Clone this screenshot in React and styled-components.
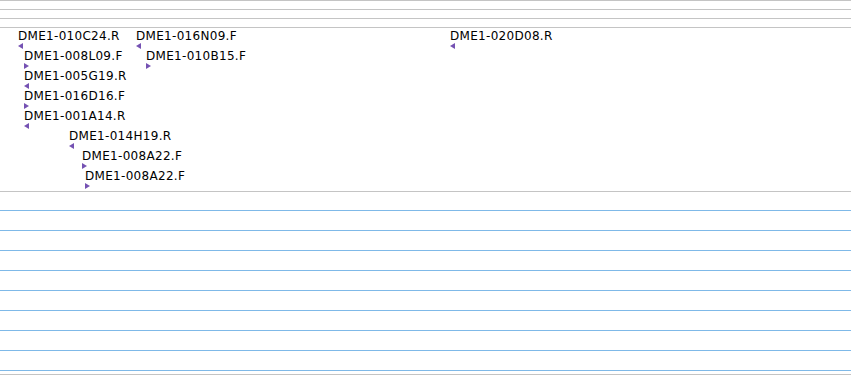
import React from "react";
import styled, { createGlobalStyle } from "styled-components";

const Global = createGlobalStyle`
  html, body { margin: 0; padding: 0; background: #ffffff; }
  body { font-family: "DejaVu Sans", "Liberation Sans", sans-serif; }
`;

const Page = styled.div`
  width: 851px;
  height: 375px;
  overflow: hidden;
  display: flex;
  flex-direction: column;
  background: #ffffff;
  & > * { flex-shrink: 0; }
`;

const RulerBand = styled.div`
  height: 8px;
  border-top: 1px solid #c4c4c4;
`;

const FeatureTrack = styled.div`
  border-top: 1px solid #c4c4c4;
  border-bottom: 1px solid #c4c4c4;
  height: 163px;
  display: flex;
  flex-direction: column;
`;

const TrackRow = styled.div`
  position: relative;
  height: 20px;
  flex: 0 0 20px;
`;

const Feature = styled.div`
  position: absolute;
  top: 0;
  display: flex;
  flex-direction: column;
  align-items: flex-start;
`;

const Label = styled.span`
  margin-top: 2px;
  font-size: 12px;
  line-height: 12px;
  letter-spacing: 0.3px;
  color: #000000;
  white-space: nowrap;
`;

const Strand = styled.svg`
  display: block;
  flex-shrink: 0;
  margin-top: 1px;
  width: 5px;
  height: 6px;
`;

const EmptyTrack = styled.div`
  display: flex;
  flex-direction: column;
  padding-top: 18px;
`;

const GridLine = styled.div`
  flex-shrink: 0;
  height: 19px;
  border-top: 1px solid #7fb9e8;
  &:last-child { height: 3px; }
`;

const BottomLine = styled.div`
  height: 0;
  border-top: 1px solid #c4c4c4;
`;

const rows = [
  [
    { x: 18, name: "DME1-010C24.R", dir: "L" },
    { x: 136, name: "DME1-016N09.F", dir: "L" },
    { x: 450, name: "DME1-020D08.R", dir: "L" },
  ],
  [
    { x: 24, name: "DME1-008L09.F", dir: "R" },
    { x: 146, name: "DME1-010B15.F", dir: "R" },
  ],
  [{ x: 24, name: "DME1-005G19.R", dir: "L" }],
  [{ x: 24, name: "DME1-016D16.F", dir: "R" }],
  [{ x: 24, name: "DME1-001A14.R", dir: "L" }],
  [{ x: 69, name: "DME1-014H19.R", dir: "L" }],
  [{ x: 82, name: "DME1-008A22.F", dir: "R" }],
  [{ x: 85, name: "DME1-008A22.F", dir: "R" }],
];

function Arrow({ dir }) {
  return (
    <Strand viewBox="0 0 5 6">
      {dir === "L" ? (
        <polygon points="5,0 5,6 0,3" fill="#7552b3" />
      ) : (
        <polygon points="0,0 0,6 5,3" fill="#7552b3" />
      )}
    </Strand>
  );
}

export default function App() {
  return (
    <Page>
      <Global />
      <RulerBand />
      <RulerBand />
      <RulerBand />
      <FeatureTrack>
        {rows.map((row, i) => (
          <TrackRow key={i}>
            {row.map((f, j) => (
              <Feature key={j} style={{ left: f.x }}>
                <Label>{f.name}</Label>
                <Arrow dir={f.dir} />
              </Feature>
            ))}
          </TrackRow>
        ))}
      </FeatureTrack>
      <EmptyTrack>
        {Array.from({ length: 9 }).map((_, i) => (
          <GridLine key={i} />
        ))}
      </EmptyTrack>
      <BottomLine />
    </Page>
  );
}
